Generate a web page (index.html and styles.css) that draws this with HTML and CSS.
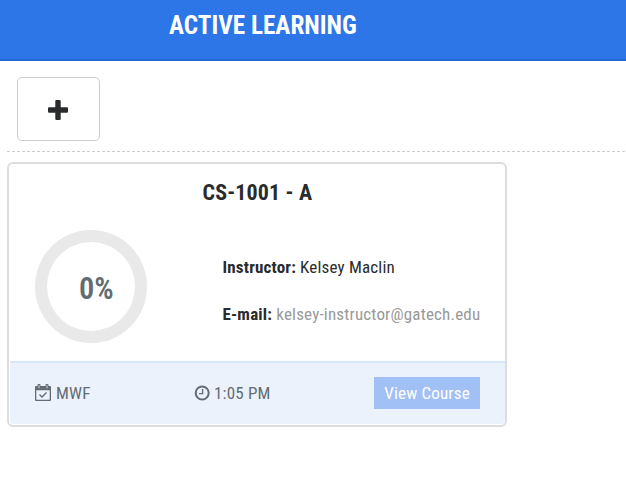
FILE: index.html
```html
<!DOCTYPE html>
<html lang="en">
<head>
<meta charset="utf-8">
<title>Active Learning</title>
<link rel="stylesheet" href="styles.css">
</head>
<body>
<header class="topbar"><h1>ACTIVE LEARNING</h1></header>
<main>
  <div class="toolbar">
    <button class="add" aria-label="Add course"><svg width="20" height="20" viewBox="0 0 20 20"><path d="M8.300 0h3.400q1 0 1 1v6.300H19q1 0 1 1v3.400q0 1-1 1h-6.300V19q0 1-1 1H8.300q-1 0-1-1v-6.300H1q-1 0-1-1V8.300q0-1 1-1h6.300V1q0-1 1-1z"/></svg></button>
  </div>
  <article class="card">
    <h2>CS-1001 - A</h2>
    <div class="details">
      <div class="progress"><span>0%</span></div>
      <div class="contact">
        <p><b>Instructor:</b> Kelsey Maclin</p>
        <p><b>E-mail:</b> <a>kelsey-instructor@gatech.edu</a></p>
      </div>
    </div>
    <footer>
      <div class="days"><svg width="16" height="17" viewBox="0 0 16 17"><path fill-rule="evenodd" d="M1 2h1.500V1q0-1 1-1h1q1 0 1 1v1h5V1q0-1 1-1h1q1 0 1 1v1H15q1 0 1 1v13q0 1-1 1H1q-1 0-1-1V3q0-1 1-1zM1.300 6.300v9.400h13.400V6.300zM3.600 1.200v3h.8v-3zM11.600 1.200v3h.8v-3z"/><path class="stroke" d="M4.500 10.500l2.500 2.500 4.500-4.500"/></svg><span>MWF</span></div>
      <div class="time"><svg width="16" height="16" viewBox="0 0 16 16"><circle class="ring" cx="8.200" cy="8" r="6.500"/><path class="stroke" d="M8.600 4v4.600H5"/></svg><span>1:05 PM</span></div>
      <button class="view"><span>View Course</span></button>
    </footer>
  </article>
</main>
</body>
</html>
```
FILE: styles.css
```css
* { box-sizing: border-box; }
body {
  margin: 0;
  background: #fff;
  color: #292b2c;
  font: 17px/24px "Roboto Condensed", Roboto, sans-serif;
  font-stretch: 75%;
  overflow: hidden;
}
h1, h2, p { margin: 0; }
button { font: inherit; font-stretch: 75%; letter-spacing: inherit; }
.topbar {
  height: 61px;
  background: #2c76e8;
  border-bottom: 2px solid #2469d4;
  padding: 10px 0 0 169px;
}
h1 { font-size: 25.200px; line-height: 32px; color: #fff; font-weight: 700; }
main { padding: 0 1px 0 7px; }
.toolbar { height: 91px; padding: 16px 10px 0; border-bottom: 1px dashed #ccc; }
.add {
  display: flex;
  align-items: center;
  justify-content: center;
  width: 83px;
  height: 64px;
  padding: 2px 1px 0 0;
  background: #fff;
  border: 1px solid #ccc;
  border-radius: 5px;
}
.add svg { fill: #292b2c; }
.card {
  width: 500px;
  height: 265px;
  margin-top: 10px;
  border: 2px solid #ddd;
  border-radius: 6px;
  padding: 14px 0 1px 1px;
}
h2 { padding-left: 192.5px; font-size: 22px; line-height: 30px; font-weight: 700; letter-spacing: .15px; }
.details { display: flex; height: 153px; padding: 22px 0 0 25px; }
.progress {
  width: 112px;
  height: 113px;
  border: 12px solid #e9e9e9;
  border-radius: 50%;
  padding: 32px 0 0 32px;
  color: #636c72;
  font-size: 30.500px;
  line-height: 30px;
  font-weight: 600;
}
.contact { padding: 25px 0 0 75.500px; white-space: nowrap; letter-spacing: .19px; }
.contact p + p { margin-top: 23px; }
.contact a { color: #999; }
footer {
  display: flex;
  align-items: center;
  height: 63px;
  padding: 0 25px 2px;
  background: #ebf2fc;
  border-top: 2px solid #d7e7fa;
  border-radius: 0 0 4px 4px;
  color: #636c72;
  letter-spacing: .18px;
}
.days, .time { display: flex; align-items: center; gap: 5px; width: 159px; }
.time { gap: 4px; width: 180px; }
footer svg { fill: #636c72; }
.stroke, .ring { fill: none; stroke: #636c72; stroke-width: 1.4; }
.ring { stroke-width: 2; }
.view { width: 106px; height: 32px; padding: 0; border: 0; background: #a1c0f6; color: #fff; }
```
